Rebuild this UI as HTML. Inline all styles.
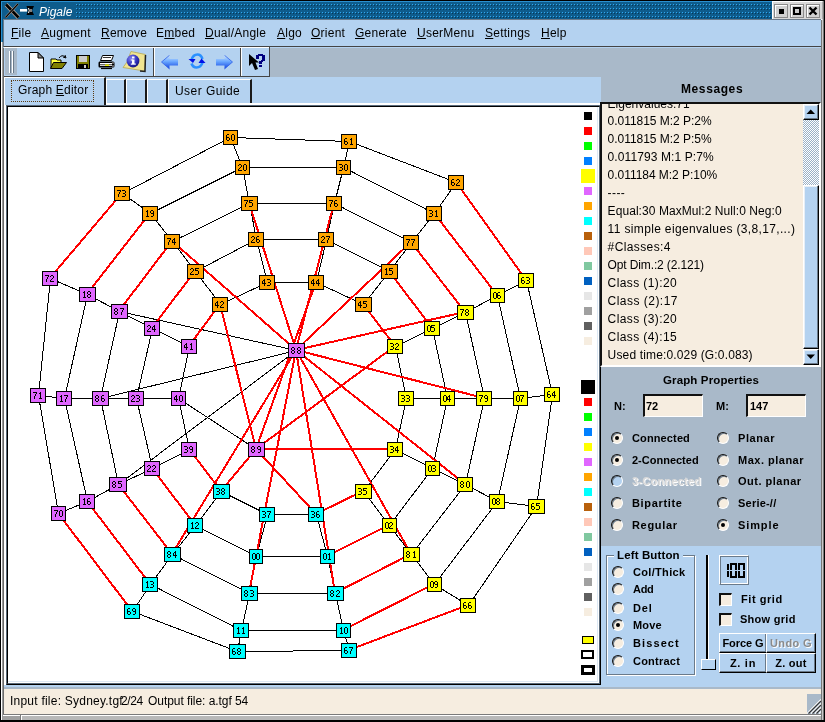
<!DOCTYPE html>
<html><head><meta charset="utf-8">
<style>
*{box-sizing:border-box}
html,body{margin:0;padding:0}
body{width:825px;height:722px;overflow:hidden;position:relative;background:#b4d2f0;font-family:"Liberation Sans",sans-serif;font-size:12px;color:#000}
.a{position:absolute}
.u{text-decoration:underline;text-underline-offset:1px}
.mi{position:absolute;top:26px;font-size:12px;line-height:14px;white-space:nowrap;letter-spacing:0.25px}
.b{font-weight:bold}
.rad{position:absolute;width:12px;height:12px;border-radius:50%;background:#f6ede0;border-top:1px solid #111;border-left:1px solid #111;border-right:1px solid #fff;border-bottom:1px solid #fff;box-shadow:inset 1px 1px 0 #6a7a8a}
.rad.on::after{content:"";position:absolute;left:3px;top:3px;width:4px;height:4px;border-radius:50%;background:#000}
.rl{position:absolute;font-weight:bold;font-size:11px;line-height:12px;white-space:nowrap}
.btn{position:absolute;background:#b4d2f0;border-top:1px solid #fff;border-left:1px solid #fff;border-right:1px solid #000;border-bottom:1px solid #000;box-shadow:inset -1px -1px 0 #6a7a8a;font-weight:bold;font-size:11px;text-align:center;line-height:19px;letter-spacing:0.4px;white-space:nowrap}
.sw{position:absolute;width:8px;height:8px}
.tab{position:absolute;top:79px;height:25px;background:#b4d2f0;border-top:1px solid #fff;border-left:1px solid #fff;border-right:2px solid #1a1a1a}
.in{position:absolute;background:#f6ede0;border-top:2px solid #111;border-left:2px solid #111;border-right:1px solid #fff;border-bottom:1px solid #fff}
</style></head><body>
<div id="wrap" style="position:absolute;left:0;top:0;width:825px;height:722px;will-change:transform">
<div class="a" style="left:0;top:0;width:825px;height:722px;background:#b4d2f0"></div>
<!-- title bar -->
<div class="a" style="left:0;top:0;width:825px;height:19px;background:#0e5c8c;border-top:1px solid #000"></div>
<div class="a" style="left:1px;top:1px;width:824px;height:1px;background:#2a90d0"></div>
<div class="a" style="left:0;top:0;width:1px;height:42px;background:#000"></div>
<div class="a" style="left:1px;top:1px;width:1px;height:41px;background:#2a90d0"></div>
<div class="a" style="left:2px;top:2px;width:1px;height:40px;background:#0e5c8c"></div>
<svg class="a" style="left:76px;top:2px" width="696" height="17">
<defs><pattern id="dots" width="3" height="4" patternUnits="userSpaceOnUse" x="0" y="2"><rect x="0" y="0" width="1" height="1" fill="#30a8f0"/><rect x="1" y="1" width="1" height="1" fill="#063a5a"/></pattern></defs>
<rect x="0" y="0" width="696" height="17" fill="url(#dots)"/>
</svg>
<svg class="a" style="left:4px;top:3px" width="32" height="16">
<path d="M2 1.5 L14.5 14.5" stroke="#c8b0a0" stroke-width="4"/>
<path d="M2 1.5 L14.5 14.5" stroke="#000" stroke-width="2.6"/>
<path d="M14 1 L1.5 14.5" stroke="#c8b0a0" stroke-width="2"/>
<path d="M14 1 L1.5 14.5" stroke="#000" stroke-width="1.2"/>
<rect x="16" y="6" width="7" height="2.6" fill="#fff"/>
<path d="M22.5 3 L30 3 L28 7.5 L30 12 L22.5 12 L24 7.5 Z" fill="#000"/>
<path d="M24.5 5 Q26 7.5 24.5 10 M27 6 V9" stroke="#fff" stroke-width="1" fill="none"/>
</svg>
<div class="a" style="left:39px;top:5px;color:#fff;font-style:italic;font-size:12px;line-height:15px">Pigale</div>
<!-- title buttons -->
<div class="a" style="left:772px;top:1px;width:51px;height:19px;background:#d8d8d8;border-left:1px solid #fff;border-top:1px solid #fff;border-bottom:1px solid #fff;border-right:1px solid #aaa"></div>
<div class="a" style="left:774px;top:4px;width:14px;height:14px;background:#d0d0d0;border:1px solid #8a8a8a;box-shadow:inset 1px 1px 0 #fff"></div>
<div class="a" style="left:779px;top:9px;width:5px;height:5px;background:#000"></div>
<div class="a" style="left:790px;top:4px;width:14px;height:14px;background:#d0d0d0;border:1px solid #8a8a8a;box-shadow:inset 1px 1px 0 #fff"></div>
<div class="a" style="left:793px;top:7px;width:8px;height:8px;border:2px solid #000;background:#ccc"></div>
<div class="a" style="left:806px;top:4px;width:14px;height:14px;background:#d0d0d0;border:1px solid #8a8a8a;box-shadow:inset 1px 1px 0 #fff"></div>
<svg class="a" style="left:806px;top:4px" width="14" height="14"><path d="M3.5 3.5 L10.5 10.5 M10.5 3.5 L3.5 10.5" stroke="#000" stroke-width="2.4"/></svg>

<!-- menu bar -->
<div class="a" style="left:3px;top:19px;width:818px;height:28px;background:#b4d2f0;border-top:1px solid #6a7a8a;border-left:1px solid #6a7a8a;border-bottom:1px solid #444"></div>
<div class="a" style="left:4px;top:47px;width:265px;height:1px;background:#fff"></div>
<div class="mi" style="left:11px"><span class="u">F</span>ile</div>
<div class="mi" style="left:41px"><span class="u">A</span>ugment</div>
<div class="mi" style="left:101px"><span class="u">R</span>emove</div>
<div class="mi" style="left:156px">E<span class="u">m</span>bed</div>
<div class="mi" style="left:205px"><span class="u">D</span>ual/Angle</div>
<div class="mi" style="left:277px"><span class="u">A</span>lgo</div>
<div class="mi" style="left:311px"><span class="u">O</span>rient</div>
<div class="mi" style="left:355px"><span class="u">G</span>enerate</div>
<div class="mi" style="left:417px"><span class="u">U</span>serMenu</div>
<div class="mi" style="left:485px"><span class="u">S</span>ettings</div>
<div class="mi" style="left:541px"><span class="u">H</span>elp</div>

<!-- toolbar -->
<div class="a" style="left:4px;top:48px;width:817px;height:29px;background:#a9b9c9"></div>
<div class="a" style="left:4px;top:46px;width:266px;height:31px;background:#b4d2f0;border-top:1px solid #444;border-right:1px solid #444;border-bottom:1px solid #444;box-shadow:inset 0 1px 0 #fff"></div>
<div class="a" style="left:5px;top:48px;width:12px;height:27px;background:#a9b9c9"></div>
<div class="a" style="left:9px;top:51px;width:2px;height:22px;background:#fff;border-right:1px solid #6a7a8a"></div>
<div class="a" style="left:12px;top:51px;width:2px;height:22px;background:#fff;border-right:1px solid #6a7a8a"></div>
<div class="a" style="left:153px;top:48px;width:2px;height:28px;border-left:1px solid #444;border-right:1px solid #fff"></div>
<div class="a" style="left:240px;top:48px;width:2px;height:28px;border-left:1px solid #444;border-right:1px solid #fff"></div>

<svg class="a" style="left:28px;top:51px" width="18" height="22">
<path d="M1.5 1.5 H10 L15.5 7 V20.5 H1.5 Z" fill="#fff" stroke="#000"/>
<path d="M10 1.5 V7 H15.5 Z" fill="#888" stroke="#000"/>
</svg>
<svg class="a" style="left:50px;top:54px" width="19" height="16">
<path d="M1 5 H6 L7 6 H11 V14 H1 Z" fill="#ffff40" stroke="#000"/>
<path d="M3.5 8.5 H16.5 L12 14.5 H0.5 Z" fill="#808000" stroke="#000"/>
<path d="M9 4 Q12 0 15 3" stroke="#000" fill="none"/><path d="M13 3 L16 4 L15 1" stroke="#000" fill="none"/>
</svg>
<svg class="a" style="left:76px;top:55px" width="15" height="15">
<rect x="0.5" y="0.5" width="13" height="13" fill="#808000" stroke="#000"/>
<rect x="3" y="1" width="8" height="6" fill="#ccc"/>
<rect x="2" y="9" width="10" height="5" fill="#000"/>
<rect x="8" y="10" width="2" height="3" fill="#ccc"/>
</svg>
<svg class="a" style="left:98px;top:54px" width="18" height="16">
<path d="M4.5 1.5 H15.5 L13.5 6.5 H2.5 Z" fill="#fff" stroke="#000"/>
<path d="M5 3.5 H13" stroke="#000" stroke-width="0.8"/>
<path d="M1.5 7.5 Q0.5 7.5 0.5 9 V12 Q0.5 13.5 1.5 13.5 H15 Q16.5 13.5 16.5 12 V9 Q16.5 7.5 15 7.5 Z" fill="#000"/>
<rect x="2" y="9" width="12" height="1" fill="#fff"/>
<rect x="2" y="10.5" width="12" height="1.5" fill="#ccc"/>
<rect x="7" y="10.5" width="4" height="1.5" fill="#ee0"/>
<path d="M3 14.5 H14" stroke="#000" stroke-width="1.2"/>
<circle cx="15" cy="9" r="0.7" fill="#fff"/><circle cx="15" cy="12" r="0.7" fill="#fff"/>
</svg>
<svg class="a" style="left:122px;top:50px" width="25" height="24">
<path d="M9 1.5 L23.5 4.5 L22.5 21 L1 17.5 L5 12 Z" fill="#f0e490" stroke="#b8a850" stroke-width="0.8"/>
<path d="M23.5 5 L23 21.5 L18 21" stroke="#222" stroke-width="1.5" fill="none"/>
<defs><radialGradient id="ig" cx="0.35" cy="0.3" r="0.8"><stop offset="0" stop-color="#8080f0"/><stop offset="0.6" stop-color="#3030b8"/><stop offset="1" stop-color="#101070"/></radialGradient></defs>
<circle cx="11" cy="11" r="6.4" fill="url(#ig)"/>
<rect x="10" y="9.5" width="2.5" height="4.5" fill="#fff"/><rect x="8.8" y="9.5" width="2" height="1" fill="#fff"/><rect x="8.8" y="13.5" width="5" height="1.2" fill="#fff"/>
<rect x="10" y="6.5" width="2.5" height="2" fill="#fff"/>
</svg>
<svg class="a" style="left:161px;top:55px" width="18" height="15">
<defs><linearGradient id="ag" x1="0" y1="0" x2="0" y2="1"><stop offset="0" stop-color="#d0e6ff"/><stop offset="0.45" stop-color="#6aa8ff"/><stop offset="1" stop-color="#1040e0"/></linearGradient></defs>
<path d="M0.5 7 L8.5 0.3 V4 H17 V10.5 H8.5 V14 Z" fill="url(#ag)"/>
<path d="M8.5 0.3 L0.5 7 L8.5 14" stroke="#3060e8" stroke-width="0.8" fill="none"/>
</svg>
<svg class="a" style="left:188px;top:53px" width="18" height="16">
<path d="M3.5 7 Q5 1.5 9.5 1.5 Q13 1.5 14.5 6" stroke="#2a90ff" stroke-width="2.6" fill="none"/>
<path d="M14.5 9.5 Q13 14.5 8.5 14.5 Q5 14.5 3.5 10.5" stroke="#2a90ff" stroke-width="2.6" fill="none"/>
<path d="M0.5 6 H7.5 L5 10 Z" fill="#0010e8"/>
<path d="M10.5 10 H17.5 L13.5 5.5 Z" fill="#0010e8"/>
</svg>
<svg class="a" style="left:215px;top:55px" width="18" height="15">
<path d="M17.5 7 L9.5 0.3 V4 H1 V10.5 H9.5 V14 Z" fill="url(#ag)"/>
<path d="M9.5 0.3 L17.5 7 L9.5 14" stroke="#3060e8" stroke-width="0.8" fill="none"/>
</svg>
<svg class="a" style="left:248px;top:53px" width="19" height="18" shape-rendering="crispEdges">
<path d="M1 1 L1 13 L4 10 L7 17 L10 16 L7.5 9.5 L11 9.5 Z" fill="#000" shape-rendering="auto"/>
<rect x="10" y="1" width="5" height="2" fill="#000080"/><rect x="8" y="2" width="3" height="4" fill="#000080"/>
<rect x="14" y="2" width="3" height="6" fill="#000080"/><rect x="13" y="7" width="2" height="2" fill="#000080"/>
<rect x="11" y="8" width="3" height="3" fill="#000080"/><rect x="11" y="12" width="3" height="2" fill="#000080"/>
</svg>


<!-- right panel gray -->
<div class="a" style="left:601px;top:77px;width:220px;height:469px;background:#a9b9c9"></div>
<!-- tabs -->
<div class="a" style="left:4px;top:77px;width:102px;height:28px;background:#b4d2f0;border-top:1px solid #fff;border-left:1px solid #fff;border-right:2px solid #1a1a1a"></div>
<div class="a" style="left:11px;top:80px;width:83px;height:22px;border:1px dotted #5a3a10"></div>
<div class="a" style="left:18px;top:83px;font-size:12px;line-height:14px;letter-spacing:0.191px">Graph <span class="u">E</span>ditor</div>
<div class="tab" style="left:106px;width:20px"></div>
<div class="tab" style="left:126px;width:21px"></div>
<div class="tab" style="left:147px;width:21px"></div>
<div class="tab" style="left:168px;width:84px"></div>
<div class="a" style="left:106px;top:103px;width:495px;height:2px;background:#fff"></div>
<div class="a" style="left:175px;top:84px;font-size:12px;line-height:14px;letter-spacing:0.444px">User Guide</div>

<!-- canvas frame -->
<div class="a" style="left:4px;top:105px;width:2px;height:580px;background:#fff"></div>
<div class="a" style="left:6px;top:105px;width:595px;height:580px;background:#fff;border-top:1px solid #5a6a7a;border-left:1px solid #5a6a7a;border-right:1px solid #000;border-bottom:1px solid #000"></div>
<div class="a" style="left:7px;top:106px;width:593px;height:578px;border-top:1px solid #000;border-left:1px solid #000;border-right:1px solid #5a6a7a;border-bottom:1px solid #5a6a7a"></div>
<div class="a" style="left:8px;top:107px;width:591px;height:576px;border-right:1px solid #fff;border-bottom:1px solid #fff"></div>
<div class="a" style="left:8px;top:107px;width:590px;height:575px;border-right:1px solid #dce8f4;border-bottom:1px solid #dce8f4"></div>
<svg width="590" height="575" viewBox="8 107 590 575" style="position:absolute;left:8px;top:107px" shape-rendering="crispEdges">
<line x1="122.5" y1="193.5" x2="230.5" y2="137.5" stroke="#000" stroke-width="1"/>
<line x1="230.5" y1="137.5" x2="349.5" y2="141.5" stroke="#000" stroke-width="1"/>
<line x1="349.5" y1="141.5" x2="456.5" y2="182.5" stroke="#000" stroke-width="1"/>
<line x1="150.5" y1="213.5" x2="242.5" y2="167.5" stroke="#000" stroke-width="1"/>
<line x1="242.5" y1="167.5" x2="343.5" y2="167.5" stroke="#000" stroke-width="1"/>
<line x1="343.5" y1="167.5" x2="434.5" y2="213.5" stroke="#000" stroke-width="1"/>
<line x1="172.5" y1="241.5" x2="249.5" y2="203.5" stroke="#000" stroke-width="1"/>
<line x1="249.5" y1="203.5" x2="334.5" y2="203.5" stroke="#000" stroke-width="1"/>
<line x1="334.5" y1="203.5" x2="411.5" y2="242.5" stroke="#000" stroke-width="1"/>
<line x1="195.5" y1="271.5" x2="256.5" y2="239.5" stroke="#000" stroke-width="1"/>
<line x1="256.5" y1="239.5" x2="326.5" y2="239.5" stroke="#000" stroke-width="1"/>
<line x1="326.5" y1="239.5" x2="389.5" y2="271.5" stroke="#000" stroke-width="1"/>
<line x1="220.5" y1="304.5" x2="267.5" y2="282.5" stroke="#000" stroke-width="1"/>
<line x1="267.5" y1="282.5" x2="316.5" y2="282.5" stroke="#000" stroke-width="1"/>
<line x1="316.5" y1="282.5" x2="363.5" y2="304.5" stroke="#000" stroke-width="1"/>
<line x1="122.5" y1="193.5" x2="150.5" y2="213.5" stroke="#000" stroke-width="1"/>
<line x1="230.5" y1="137.5" x2="242.5" y2="167.5" stroke="#000" stroke-width="1"/>
<line x1="349.5" y1="141.5" x2="343.5" y2="167.5" stroke="#000" stroke-width="1"/>
<line x1="456.5" y1="182.5" x2="434.5" y2="213.5" stroke="#000" stroke-width="1"/>
<line x1="150.5" y1="213.5" x2="172.5" y2="241.5" stroke="#000" stroke-width="1"/>
<line x1="242.5" y1="167.5" x2="249.5" y2="203.5" stroke="#000" stroke-width="1"/>
<line x1="343.5" y1="167.5" x2="334.5" y2="203.5" stroke="#000" stroke-width="1"/>
<line x1="434.5" y1="213.5" x2="411.5" y2="242.5" stroke="#000" stroke-width="1"/>
<line x1="172.5" y1="241.5" x2="195.5" y2="271.5" stroke="#000" stroke-width="1"/>
<line x1="249.5" y1="203.5" x2="256.5" y2="239.5" stroke="#000" stroke-width="1"/>
<line x1="334.5" y1="203.5" x2="326.5" y2="239.5" stroke="#000" stroke-width="1"/>
<line x1="411.5" y1="242.5" x2="389.5" y2="271.5" stroke="#000" stroke-width="1"/>
<line x1="195.5" y1="271.5" x2="220.5" y2="304.5" stroke="#000" stroke-width="1"/>
<line x1="256.5" y1="239.5" x2="267.5" y2="282.5" stroke="#000" stroke-width="1"/>
<line x1="326.5" y1="239.5" x2="316.5" y2="282.5" stroke="#000" stroke-width="1"/>
<line x1="389.5" y1="271.5" x2="363.5" y2="304.5" stroke="#000" stroke-width="1"/>
<line x1="50.5" y1="278.5" x2="38.5" y2="395.5" stroke="#000" stroke-width="1"/>
<line x1="38.5" y1="395.5" x2="58.5" y2="513.5" stroke="#000" stroke-width="1"/>
<line x1="87.5" y1="294.5" x2="64.5" y2="398.5" stroke="#000" stroke-width="1"/>
<line x1="64.5" y1="398.5" x2="87.5" y2="501.5" stroke="#000" stroke-width="1"/>
<line x1="119.5" y1="311.5" x2="100.5" y2="398.5" stroke="#000" stroke-width="1"/>
<line x1="100.5" y1="398.5" x2="118.5" y2="484.5" stroke="#000" stroke-width="1"/>
<line x1="152.5" y1="328.5" x2="136.5" y2="398.5" stroke="#000" stroke-width="1"/>
<line x1="136.5" y1="398.5" x2="152.5" y2="468.5" stroke="#000" stroke-width="1"/>
<line x1="189.5" y1="346.5" x2="178.5" y2="398.5" stroke="#000" stroke-width="1"/>
<line x1="178.5" y1="398.5" x2="189.5" y2="449.5" stroke="#000" stroke-width="1"/>
<line x1="50.5" y1="278.5" x2="87.5" y2="294.5" stroke="#000" stroke-width="1"/>
<line x1="38.5" y1="395.5" x2="64.5" y2="398.5" stroke="#000" stroke-width="1"/>
<line x1="58.5" y1="513.5" x2="87.5" y2="501.5" stroke="#000" stroke-width="1"/>
<line x1="87.5" y1="294.5" x2="119.5" y2="311.5" stroke="#000" stroke-width="1"/>
<line x1="64.5" y1="398.5" x2="100.5" y2="398.5" stroke="#000" stroke-width="1"/>
<line x1="87.5" y1="501.5" x2="118.5" y2="484.5" stroke="#000" stroke-width="1"/>
<line x1="119.5" y1="311.5" x2="152.5" y2="328.5" stroke="#000" stroke-width="1"/>
<line x1="100.5" y1="398.5" x2="136.5" y2="398.5" stroke="#000" stroke-width="1"/>
<line x1="118.5" y1="484.5" x2="152.5" y2="468.5" stroke="#000" stroke-width="1"/>
<line x1="152.5" y1="328.5" x2="189.5" y2="346.5" stroke="#000" stroke-width="1"/>
<line x1="136.5" y1="398.5" x2="178.5" y2="398.5" stroke="#000" stroke-width="1"/>
<line x1="152.5" y1="468.5" x2="189.5" y2="449.5" stroke="#000" stroke-width="1"/>
<line x1="132.5" y1="611.5" x2="237.5" y2="651.5" stroke="#000" stroke-width="1"/>
<line x1="237.5" y1="651.5" x2="349.5" y2="650.5" stroke="#000" stroke-width="1"/>
<line x1="150.5" y1="584.5" x2="241.5" y2="630.5" stroke="#000" stroke-width="1"/>
<line x1="241.5" y1="630.5" x2="343.5" y2="630.5" stroke="#000" stroke-width="1"/>
<line x1="172.5" y1="554.5" x2="249.5" y2="593.5" stroke="#000" stroke-width="1"/>
<line x1="249.5" y1="593.5" x2="335.5" y2="593.5" stroke="#000" stroke-width="1"/>
<line x1="195.5" y1="525.5" x2="256.5" y2="556.5" stroke="#000" stroke-width="1"/>
<line x1="256.5" y1="556.5" x2="327.5" y2="556.5" stroke="#000" stroke-width="1"/>
<line x1="221.5" y1="491.5" x2="267.5" y2="514.5" stroke="#000" stroke-width="1"/>
<line x1="267.5" y1="514.5" x2="316.5" y2="514.5" stroke="#000" stroke-width="1"/>
<line x1="132.5" y1="611.5" x2="150.5" y2="584.5" stroke="#000" stroke-width="1"/>
<line x1="237.5" y1="651.5" x2="241.5" y2="630.5" stroke="#000" stroke-width="1"/>
<line x1="349.5" y1="650.5" x2="343.5" y2="630.5" stroke="#000" stroke-width="1"/>
<line x1="150.5" y1="584.5" x2="172.5" y2="554.5" stroke="#000" stroke-width="1"/>
<line x1="241.5" y1="630.5" x2="249.5" y2="593.5" stroke="#000" stroke-width="1"/>
<line x1="343.5" y1="630.5" x2="335.5" y2="593.5" stroke="#000" stroke-width="1"/>
<line x1="172.5" y1="554.5" x2="195.5" y2="525.5" stroke="#000" stroke-width="1"/>
<line x1="249.5" y1="593.5" x2="256.5" y2="556.5" stroke="#000" stroke-width="1"/>
<line x1="335.5" y1="593.5" x2="327.5" y2="556.5" stroke="#000" stroke-width="1"/>
<line x1="195.5" y1="525.5" x2="221.5" y2="491.5" stroke="#000" stroke-width="1"/>
<line x1="256.5" y1="556.5" x2="267.5" y2="514.5" stroke="#000" stroke-width="1"/>
<line x1="327.5" y1="556.5" x2="316.5" y2="514.5" stroke="#000" stroke-width="1"/>
<line x1="526.5" y1="280.5" x2="552.5" y2="394.5" stroke="#000" stroke-width="1"/>
<line x1="552.5" y1="394.5" x2="536.5" y2="506.5" stroke="#000" stroke-width="1"/>
<line x1="536.5" y1="506.5" x2="468.5" y2="605.5" stroke="#000" stroke-width="1"/>
<line x1="497.5" y1="295.5" x2="520.5" y2="398.5" stroke="#000" stroke-width="1"/>
<line x1="520.5" y1="398.5" x2="497.5" y2="501.5" stroke="#000" stroke-width="1"/>
<line x1="497.5" y1="501.5" x2="434.5" y2="584.5" stroke="#000" stroke-width="1"/>
<line x1="465.5" y1="312.5" x2="484.5" y2="398.5" stroke="#000" stroke-width="1"/>
<line x1="484.5" y1="398.5" x2="465.5" y2="484.5" stroke="#000" stroke-width="1"/>
<line x1="465.5" y1="484.5" x2="411.5" y2="554.5" stroke="#000" stroke-width="1"/>
<line x1="432.5" y1="328.5" x2="447.5" y2="398.5" stroke="#000" stroke-width="1"/>
<line x1="447.5" y1="398.5" x2="432.5" y2="468.5" stroke="#000" stroke-width="1"/>
<line x1="432.5" y1="468.5" x2="389.5" y2="525.5" stroke="#000" stroke-width="1"/>
<line x1="395.5" y1="346.5" x2="406.5" y2="398.5" stroke="#000" stroke-width="1"/>
<line x1="406.5" y1="398.5" x2="395.5" y2="449.5" stroke="#000" stroke-width="1"/>
<line x1="395.5" y1="449.5" x2="363.5" y2="491.5" stroke="#000" stroke-width="1"/>
<line x1="526.5" y1="280.5" x2="497.5" y2="295.5" stroke="#000" stroke-width="1"/>
<line x1="552.5" y1="394.5" x2="520.5" y2="398.5" stroke="#000" stroke-width="1"/>
<line x1="536.5" y1="506.5" x2="497.5" y2="501.5" stroke="#000" stroke-width="1"/>
<line x1="468.5" y1="605.5" x2="434.5" y2="584.5" stroke="#000" stroke-width="1"/>
<line x1="497.5" y1="295.5" x2="465.5" y2="312.5" stroke="#000" stroke-width="1"/>
<line x1="520.5" y1="398.5" x2="484.5" y2="398.5" stroke="#000" stroke-width="1"/>
<line x1="497.5" y1="501.5" x2="465.5" y2="484.5" stroke="#000" stroke-width="1"/>
<line x1="434.5" y1="584.5" x2="411.5" y2="554.5" stroke="#000" stroke-width="1"/>
<line x1="465.5" y1="312.5" x2="432.5" y2="328.5" stroke="#000" stroke-width="1"/>
<line x1="484.5" y1="398.5" x2="447.5" y2="398.5" stroke="#000" stroke-width="1"/>
<line x1="465.5" y1="484.5" x2="432.5" y2="468.5" stroke="#000" stroke-width="1"/>
<line x1="411.5" y1="554.5" x2="389.5" y2="525.5" stroke="#000" stroke-width="1"/>
<line x1="432.5" y1="328.5" x2="395.5" y2="346.5" stroke="#000" stroke-width="1"/>
<line x1="447.5" y1="398.5" x2="406.5" y2="398.5" stroke="#000" stroke-width="1"/>
<line x1="432.5" y1="468.5" x2="395.5" y2="449.5" stroke="#000" stroke-width="1"/>
<line x1="389.5" y1="525.5" x2="363.5" y2="491.5" stroke="#000" stroke-width="1"/>
<line x1="296.5" y1="350.5" x2="118.5" y2="484.5" stroke="#000" stroke-width="1"/>
<line x1="296.5" y1="350.5" x2="100.5" y2="398.5" stroke="#000" stroke-width="1"/>
<line x1="296.5" y1="350.5" x2="119.5" y2="311.5" stroke="#000" stroke-width="1"/>
<line x1="256.5" y1="449.5" x2="178.5" y2="398.5" stroke="#000" stroke-width="1"/>
<line x1="122" y1="193" x2="50" y2="278" stroke="#f00" stroke-width="2"/>
<line x1="58" y1="513" x2="132" y2="611" stroke="#f00" stroke-width="2"/>
<line x1="349" y1="650" x2="468" y2="605" stroke="#f00" stroke-width="2"/>
<line x1="526" y1="280" x2="456" y2="182" stroke="#f00" stroke-width="2"/>
<line x1="150" y1="213" x2="87" y2="294" stroke="#f00" stroke-width="2"/>
<line x1="87" y1="501" x2="150" y2="584" stroke="#f00" stroke-width="2"/>
<line x1="343" y1="630" x2="434" y2="584" stroke="#f00" stroke-width="2"/>
<line x1="497" y1="295" x2="434" y2="213" stroke="#f00" stroke-width="2"/>
<line x1="172" y1="241" x2="119" y2="311" stroke="#f00" stroke-width="2"/>
<line x1="118" y1="484" x2="172" y2="554" stroke="#f00" stroke-width="2"/>
<line x1="335" y1="593" x2="411" y2="554" stroke="#f00" stroke-width="2"/>
<line x1="465" y1="312" x2="411" y2="242" stroke="#f00" stroke-width="2"/>
<line x1="195" y1="271" x2="152" y2="328" stroke="#f00" stroke-width="2"/>
<line x1="152" y1="468" x2="195" y2="525" stroke="#f00" stroke-width="2"/>
<line x1="327" y1="556" x2="389" y2="525" stroke="#f00" stroke-width="2"/>
<line x1="432" y1="328" x2="389" y2="271" stroke="#f00" stroke-width="2"/>
<line x1="220" y1="304" x2="189" y2="346" stroke="#f00" stroke-width="2"/>
<line x1="189" y1="449" x2="221" y2="491" stroke="#f00" stroke-width="2"/>
<line x1="316" y1="514" x2="363" y2="491" stroke="#f00" stroke-width="2"/>
<line x1="395" y1="346" x2="363" y2="304" stroke="#f00" stroke-width="2"/>
<line x1="296" y1="350" x2="172" y2="241" stroke="#f00" stroke-width="2"/>
<line x1="296" y1="350" x2="249" y2="203" stroke="#f00" stroke-width="2"/>
<line x1="296" y1="350" x2="334" y2="203" stroke="#f00" stroke-width="2"/>
<line x1="296" y1="350" x2="411" y2="242" stroke="#f00" stroke-width="2"/>
<line x1="296" y1="350" x2="465" y2="312" stroke="#f00" stroke-width="2"/>
<line x1="296" y1="350" x2="484" y2="398" stroke="#f00" stroke-width="2"/>
<line x1="296" y1="350" x2="465" y2="484" stroke="#f00" stroke-width="2"/>
<line x1="296" y1="350" x2="411" y2="554" stroke="#f00" stroke-width="2"/>
<line x1="296" y1="350" x2="335" y2="593" stroke="#f00" stroke-width="2"/>
<line x1="296" y1="350" x2="249" y2="593" stroke="#f00" stroke-width="2"/>
<line x1="296" y1="350" x2="172" y2="554" stroke="#f00" stroke-width="2"/>
<line x1="256" y1="449" x2="220" y2="304" stroke="#f00" stroke-width="2"/>
<line x1="256" y1="449" x2="316" y2="282" stroke="#f00" stroke-width="2"/>
<line x1="256" y1="449" x2="395" y2="346" stroke="#f00" stroke-width="2"/>
<line x1="256" y1="449" x2="395" y2="449" stroke="#f00" stroke-width="2"/>
<line x1="256" y1="449" x2="316" y2="514" stroke="#f00" stroke-width="2"/>
<line x1="256" y1="449" x2="221" y2="491" stroke="#f00" stroke-width="2"/>
<rect x="249.5" y="549.5" width="13" height="14" fill="#00ffff" stroke="#000"/>
<rect x="320.5" y="549.5" width="14" height="14" fill="#00ffff" stroke="#000"/>
<rect x="382.5" y="518.5" width="14" height="14" fill="#ffff00" stroke="#000"/>
<rect x="425.5" y="461.5" width="14" height="14" fill="#ffff00" stroke="#000"/>
<rect x="440.5" y="391.5" width="14" height="14" fill="#ffff00" stroke="#000"/>
<rect x="424.5" y="321.5" width="15" height="14" fill="#ffff00" stroke="#000"/>
<rect x="490.5" y="288.5" width="14" height="14" fill="#ffff00" stroke="#000"/>
<rect x="513.5" y="391.5" width="14" height="14" fill="#ffff00" stroke="#000"/>
<rect x="489.5" y="494.5" width="15" height="14" fill="#ffff00" stroke="#000"/>
<rect x="427.5" y="577.5" width="14" height="14" fill="#ffff00" stroke="#000"/>
<rect x="336.5" y="623.5" width="14" height="14" fill="#00ffff" stroke="#000"/>
<rect x="233.5" y="623.5" width="15" height="14" fill="#00ffff" stroke="#000"/>
<rect x="187.5" y="518.5" width="15" height="14" fill="#00ffff" stroke="#000"/>
<rect x="142.5" y="577.5" width="15" height="14" fill="#00ffff" stroke="#000"/>
<rect x="381.5" y="264.5" width="16" height="14" fill="#ffa500" stroke="#000"/>
<rect x="79.5" y="494.5" width="15" height="14" fill="#e066ff" stroke="#000"/>
<rect x="56.5" y="391.5" width="15" height="14" fill="#e066ff" stroke="#000"/>
<rect x="79.5" y="287.5" width="16" height="14" fill="#e066ff" stroke="#000"/>
<rect x="142.5" y="206.5" width="15" height="14" fill="#ffa500" stroke="#000"/>
<rect x="235.5" y="160.5" width="14" height="14" fill="#ffa500" stroke="#000"/>
<rect x="144.5" y="461.5" width="15" height="14" fill="#e066ff" stroke="#000"/>
<rect x="128.5" y="391.5" width="15" height="14" fill="#e066ff" stroke="#000"/>
<rect x="144.5" y="321.5" width="15" height="14" fill="#e066ff" stroke="#000"/>
<rect x="187.5" y="264.5" width="16" height="14" fill="#ffa500" stroke="#000"/>
<rect x="248.5" y="232.5" width="15" height="14" fill="#ffa500" stroke="#000"/>
<rect x="318.5" y="232.5" width="15" height="14" fill="#ffa500" stroke="#000"/>
<rect x="336.5" y="160.5" width="14" height="14" fill="#ffa500" stroke="#000"/>
<rect x="426.5" y="206.5" width="15" height="14" fill="#ffa500" stroke="#000"/>
<rect x="387.5" y="339.5" width="15" height="14" fill="#ffff00" stroke="#000"/>
<rect x="398.5" y="391.5" width="15" height="14" fill="#ffff00" stroke="#000"/>
<rect x="387.5" y="442.5" width="15" height="14" fill="#ffff00" stroke="#000"/>
<rect x="355.5" y="484.5" width="16" height="14" fill="#ffff00" stroke="#000"/>
<rect x="308.5" y="507.5" width="15" height="14" fill="#00ffff" stroke="#000"/>
<rect x="259.5" y="507.5" width="15" height="14" fill="#00ffff" stroke="#000"/>
<rect x="213.5" y="484.5" width="16" height="14" fill="#00ffff" stroke="#000"/>
<rect x="181.5" y="442.5" width="15" height="14" fill="#e066ff" stroke="#000"/>
<rect x="171.5" y="391.5" width="14" height="14" fill="#e066ff" stroke="#000"/>
<rect x="181.5" y="339.5" width="15" height="14" fill="#e066ff" stroke="#000"/>
<rect x="212.5" y="297.5" width="15" height="14" fill="#ffa500" stroke="#000"/>
<rect x="259.5" y="275.5" width="15" height="14" fill="#ffa500" stroke="#000"/>
<rect x="308.5" y="275.5" width="15" height="14" fill="#ffa500" stroke="#000"/>
<rect x="355.5" y="297.5" width="16" height="14" fill="#ffa500" stroke="#000"/>
<rect x="223.5" y="130.5" width="14" height="14" fill="#ffa500" stroke="#000"/>
<rect x="341.5" y="134.5" width="15" height="14" fill="#ffa500" stroke="#000"/>
<rect x="448.5" y="175.5" width="15" height="14" fill="#ffa500" stroke="#000"/>
<rect x="518.5" y="273.5" width="15" height="14" fill="#ffff00" stroke="#000"/>
<rect x="544.5" y="387.5" width="15" height="14" fill="#ffff00" stroke="#000"/>
<rect x="528.5" y="499.5" width="16" height="14" fill="#ffff00" stroke="#000"/>
<rect x="460.5" y="598.5" width="15" height="14" fill="#ffff00" stroke="#000"/>
<rect x="341.5" y="643.5" width="15" height="14" fill="#00ffff" stroke="#000"/>
<rect x="229.5" y="644.5" width="16" height="14" fill="#00ffff" stroke="#000"/>
<rect x="124.5" y="604.5" width="15" height="14" fill="#00ffff" stroke="#000"/>
<rect x="51.5" y="506.5" width="14" height="14" fill="#e066ff" stroke="#000"/>
<rect x="30.5" y="388.5" width="15" height="14" fill="#e066ff" stroke="#000"/>
<rect x="42.5" y="271.5" width="15" height="14" fill="#e066ff" stroke="#000"/>
<rect x="114.5" y="186.5" width="15" height="14" fill="#ffa500" stroke="#000"/>
<rect x="164.5" y="234.5" width="15" height="14" fill="#ffa500" stroke="#000"/>
<rect x="241.5" y="196.5" width="16" height="14" fill="#ffa500" stroke="#000"/>
<rect x="326.5" y="196.5" width="15" height="14" fill="#ffa500" stroke="#000"/>
<rect x="403.5" y="235.5" width="15" height="14" fill="#ffa500" stroke="#000"/>
<rect x="457.5" y="305.5" width="16" height="14" fill="#ffff00" stroke="#000"/>
<rect x="476.5" y="391.5" width="15" height="14" fill="#ffff00" stroke="#000"/>
<rect x="457.5" y="477.5" width="15" height="14" fill="#ffff00" stroke="#000"/>
<rect x="403.5" y="547.5" width="16" height="14" fill="#ffff00" stroke="#000"/>
<rect x="327.5" y="586.5" width="16" height="14" fill="#00ffff" stroke="#000"/>
<rect x="241.5" y="586.5" width="16" height="14" fill="#00ffff" stroke="#000"/>
<rect x="164.5" y="547.5" width="16" height="14" fill="#00ffff" stroke="#000"/>
<rect x="109.5" y="477.5" width="17" height="14" fill="#e066ff" stroke="#000"/>
<rect x="92.5" y="391.5" width="16" height="14" fill="#e066ff" stroke="#000"/>
<rect x="111.5" y="304.5" width="16" height="14" fill="#e066ff" stroke="#000"/>
<rect x="288.5" y="343.5" width="16" height="14" fill="#e066ff" stroke="#000"/>
<rect x="248.5" y="442.5" width="16" height="14" fill="#e066ff" stroke="#000"/>
<path fill="#000" d="
M253 553h2v1h-2zM252 554h1v1h-1zM255 554h1v1h-1zM252 555h1v1h-1zM255 555h1v1h-1zM252 556h1v1h-1zM255 556h1v1h-1zM252 557h1v1h-1zM255 557h1v1h-1zM252 558h1v1h-1zM255 558h1v1h-1zM253 559h2v1h-2zM257 553h2v1h-2zM256 554h1v1h-1zM259 554h1v1h-1zM256 555h1v1h-1zM259 555h1v1h-1zM256 556h1v1h-1zM259 556h1v1h-1zM256 557h1v1h-1zM259 557h1v1h-1zM256 558h1v1h-1zM259 558h1v1h-1zM257 559h2v1h-2z
M324 553h2v1h-2zM323 554h1v1h-1zM326 554h1v1h-1zM323 555h1v1h-1zM326 555h1v1h-1zM323 556h1v1h-1zM326 556h1v1h-1zM323 557h1v1h-1zM326 557h1v1h-1zM323 558h1v1h-1zM326 558h1v1h-1zM324 559h2v1h-2zM329 553h1v1h-1zM328 554h2v1h-2zM329 555h1v1h-1zM329 556h1v1h-1zM329 557h1v1h-1zM329 558h1v1h-1zM328 559h3v1h-3z
M386 522h2v1h-2zM385 523h1v1h-1zM388 523h1v1h-1zM385 524h1v1h-1zM388 524h1v1h-1zM385 525h1v1h-1zM388 525h1v1h-1zM385 526h1v1h-1zM388 526h1v1h-1zM385 527h1v1h-1zM388 527h1v1h-1zM386 528h2v1h-2zM390 522h2v1h-2zM389 523h1v1h-1zM392 523h1v1h-1zM392 524h1v1h-1zM391 525h1v1h-1zM390 526h1v1h-1zM389 527h1v1h-1zM389 528h4v1h-4z
M429 465h2v1h-2zM428 466h1v1h-1zM431 466h1v1h-1zM428 467h1v1h-1zM431 467h1v1h-1zM428 468h1v1h-1zM431 468h1v1h-1zM428 469h1v1h-1zM431 469h1v1h-1zM428 470h1v1h-1zM431 470h1v1h-1zM429 471h2v1h-2zM432 465h3v1h-3zM435 466h1v1h-1zM435 467h1v1h-1zM433 468h2v1h-2zM435 469h1v1h-1zM435 470h1v1h-1zM432 471h3v1h-3z
M444 395h2v1h-2zM443 396h1v1h-1zM446 396h1v1h-1zM443 397h1v1h-1zM446 397h1v1h-1zM443 398h1v1h-1zM446 398h1v1h-1zM443 399h1v1h-1zM446 399h1v1h-1zM443 400h1v1h-1zM446 400h1v1h-1zM444 401h2v1h-2zM449 395h1v1h-1zM448 396h2v1h-2zM447 397h1v1h-1zM449 397h1v1h-1zM447 398h1v1h-1zM449 398h1v1h-1zM447 399h4v1h-4zM449 400h1v1h-1zM449 401h1v1h-1z
M428 325h2v1h-2zM427 326h1v1h-1zM430 326h1v1h-1zM427 327h1v1h-1zM430 327h1v1h-1zM427 328h1v1h-1zM430 328h1v1h-1zM427 329h1v1h-1zM430 329h1v1h-1zM427 330h1v1h-1zM430 330h1v1h-1zM428 331h2v1h-2zM431 325h4v1h-4zM431 326h1v1h-1zM431 327h3v1h-3zM434 328h1v1h-1zM434 329h1v1h-1zM434 330h1v1h-1zM431 331h3v1h-3z
M494 292h2v1h-2zM493 293h1v1h-1zM496 293h1v1h-1zM493 294h1v1h-1zM496 294h1v1h-1zM493 295h1v1h-1zM496 295h1v1h-1zM493 296h1v1h-1zM496 296h1v1h-1zM493 297h1v1h-1zM496 297h1v1h-1zM494 298h2v1h-2zM498 292h2v1h-2zM497 293h1v1h-1zM497 294h1v1h-1zM497 295h3v1h-3zM497 296h1v1h-1zM500 296h1v1h-1zM497 297h1v1h-1zM500 297h1v1h-1zM498 298h2v1h-2z
M517 395h2v1h-2zM516 396h1v1h-1zM519 396h1v1h-1zM516 397h1v1h-1zM519 397h1v1h-1zM516 398h1v1h-1zM519 398h1v1h-1zM516 399h1v1h-1zM519 399h1v1h-1zM516 400h1v1h-1zM519 400h1v1h-1zM517 401h2v1h-2zM520 395h4v1h-4zM523 396h1v1h-1zM522 397h1v1h-1zM522 398h1v1h-1zM521 399h1v1h-1zM521 400h1v1h-1zM521 401h1v1h-1z
M493 498h2v1h-2zM492 499h1v1h-1zM495 499h1v1h-1zM492 500h1v1h-1zM495 500h1v1h-1zM492 501h1v1h-1zM495 501h1v1h-1zM492 502h1v1h-1zM495 502h1v1h-1zM492 503h1v1h-1zM495 503h1v1h-1zM493 504h2v1h-2zM497 498h2v1h-2zM496 499h1v1h-1zM499 499h1v1h-1zM496 500h1v1h-1zM499 500h1v1h-1zM497 501h2v1h-2zM496 502h1v1h-1zM499 502h1v1h-1zM496 503h1v1h-1zM499 503h1v1h-1zM497 504h2v1h-2z
M431 581h2v1h-2zM430 582h1v1h-1zM433 582h1v1h-1zM430 583h1v1h-1zM433 583h1v1h-1zM430 584h1v1h-1zM433 584h1v1h-1zM430 585h1v1h-1zM433 585h1v1h-1zM430 586h1v1h-1zM433 586h1v1h-1zM431 587h2v1h-2zM435 581h2v1h-2zM434 582h1v1h-1zM437 582h1v1h-1zM434 583h1v1h-1zM437 583h1v1h-1zM435 584h3v1h-3zM437 585h1v1h-1zM437 586h1v1h-1zM435 587h2v1h-2z
M341 627h1v1h-1zM340 628h2v1h-2zM341 629h1v1h-1zM341 630h1v1h-1zM341 631h1v1h-1zM341 632h1v1h-1zM340 633h3v1h-3zM345 627h2v1h-2zM344 628h1v1h-1zM347 628h1v1h-1zM344 629h1v1h-1zM347 629h1v1h-1zM344 630h1v1h-1zM347 630h1v1h-1zM344 631h1v1h-1zM347 631h1v1h-1zM344 632h1v1h-1zM347 632h1v1h-1zM345 633h2v1h-2z
M238 627h1v1h-1zM237 628h2v1h-2zM238 629h1v1h-1zM238 630h1v1h-1zM238 631h1v1h-1zM238 632h1v1h-1zM237 633h3v1h-3zM243 627h1v1h-1zM242 628h2v1h-2zM243 629h1v1h-1zM243 630h1v1h-1zM243 631h1v1h-1zM243 632h1v1h-1zM242 633h3v1h-3z
M192 522h1v1h-1zM191 523h2v1h-2zM192 524h1v1h-1zM192 525h1v1h-1zM192 526h1v1h-1zM192 527h1v1h-1zM191 528h3v1h-3zM196 522h2v1h-2zM195 523h1v1h-1zM198 523h1v1h-1zM198 524h1v1h-1zM197 525h1v1h-1zM196 526h1v1h-1zM195 527h1v1h-1zM195 528h4v1h-4z
M147 581h1v1h-1zM146 582h2v1h-2zM147 583h1v1h-1zM147 584h1v1h-1zM147 585h1v1h-1zM147 586h1v1h-1zM146 587h3v1h-3zM150 581h3v1h-3zM153 582h1v1h-1zM153 583h1v1h-1zM151 584h2v1h-2zM153 585h1v1h-1zM153 586h1v1h-1zM150 587h3v1h-3z
M386 268h1v1h-1zM385 269h2v1h-2zM386 270h1v1h-1zM386 271h1v1h-1zM386 272h1v1h-1zM386 273h1v1h-1zM385 274h3v1h-3zM389 268h4v1h-4zM389 269h1v1h-1zM389 270h3v1h-3zM392 271h1v1h-1zM392 272h1v1h-1zM392 273h1v1h-1zM389 274h3v1h-3z
M84 498h1v1h-1zM83 499h2v1h-2zM84 500h1v1h-1zM84 501h1v1h-1zM84 502h1v1h-1zM84 503h1v1h-1zM83 504h3v1h-3zM88 498h2v1h-2zM87 499h1v1h-1zM87 500h1v1h-1zM87 501h3v1h-3zM87 502h1v1h-1zM90 502h1v1h-1zM87 503h1v1h-1zM90 503h1v1h-1zM88 504h2v1h-2z
M61 395h1v1h-1zM60 396h2v1h-2zM61 397h1v1h-1zM61 398h1v1h-1zM61 399h1v1h-1zM61 400h1v1h-1zM60 401h3v1h-3zM64 395h4v1h-4zM67 396h1v1h-1zM66 397h1v1h-1zM66 398h1v1h-1zM65 399h1v1h-1zM65 400h1v1h-1zM65 401h1v1h-1z
M84 291h1v1h-1zM83 292h2v1h-2zM84 293h1v1h-1zM84 294h1v1h-1zM84 295h1v1h-1zM84 296h1v1h-1zM83 297h3v1h-3zM88 291h2v1h-2zM87 292h1v1h-1zM90 292h1v1h-1zM87 293h1v1h-1zM90 293h1v1h-1zM88 294h2v1h-2zM87 295h1v1h-1zM90 295h1v1h-1zM87 296h1v1h-1zM90 296h1v1h-1zM88 297h2v1h-2z
M147 210h1v1h-1zM146 211h2v1h-2zM147 212h1v1h-1zM147 213h1v1h-1zM147 214h1v1h-1zM147 215h1v1h-1zM146 216h3v1h-3zM151 210h2v1h-2zM150 211h1v1h-1zM153 211h1v1h-1zM150 212h1v1h-1zM153 212h1v1h-1zM151 213h3v1h-3zM153 214h1v1h-1zM153 215h1v1h-1zM151 216h2v1h-2z
M239 164h2v1h-2zM238 165h1v1h-1zM241 165h1v1h-1zM241 166h1v1h-1zM240 167h1v1h-1zM239 168h1v1h-1zM238 169h1v1h-1zM238 170h4v1h-4zM244 164h2v1h-2zM243 165h1v1h-1zM246 165h1v1h-1zM243 166h1v1h-1zM246 166h1v1h-1zM243 167h1v1h-1zM246 167h1v1h-1zM243 168h1v1h-1zM246 168h1v1h-1zM243 169h1v1h-1zM246 169h1v1h-1zM244 170h2v1h-2z
M148 465h2v1h-2zM147 466h1v1h-1zM150 466h1v1h-1zM150 467h1v1h-1zM149 468h1v1h-1zM148 469h1v1h-1zM147 470h1v1h-1zM147 471h4v1h-4zM153 465h2v1h-2zM152 466h1v1h-1zM155 466h1v1h-1zM155 467h1v1h-1zM154 468h1v1h-1zM153 469h1v1h-1zM152 470h1v1h-1zM152 471h4v1h-4z
M132 395h2v1h-2zM131 396h1v1h-1zM134 396h1v1h-1zM134 397h1v1h-1zM133 398h1v1h-1zM132 399h1v1h-1zM131 400h1v1h-1zM131 401h4v1h-4zM136 395h3v1h-3zM139 396h1v1h-1zM139 397h1v1h-1zM137 398h2v1h-2zM139 399h1v1h-1zM139 400h1v1h-1zM136 401h3v1h-3z
M148 325h2v1h-2zM147 326h1v1h-1zM150 326h1v1h-1zM150 327h1v1h-1zM149 328h1v1h-1zM148 329h1v1h-1zM147 330h1v1h-1zM147 331h4v1h-4zM154 325h1v1h-1zM153 326h2v1h-2zM152 327h1v1h-1zM154 327h1v1h-1zM152 328h1v1h-1zM154 328h1v1h-1zM152 329h4v1h-4zM154 330h1v1h-1zM154 331h1v1h-1z
M191 268h2v1h-2zM190 269h1v1h-1zM193 269h1v1h-1zM193 270h1v1h-1zM192 271h1v1h-1zM191 272h1v1h-1zM190 273h1v1h-1zM190 274h4v1h-4zM195 268h4v1h-4zM195 269h1v1h-1zM195 270h3v1h-3zM198 271h1v1h-1zM198 272h1v1h-1zM198 273h1v1h-1zM195 274h3v1h-3z
M252 236h2v1h-2zM251 237h1v1h-1zM254 237h1v1h-1zM254 238h1v1h-1zM253 239h1v1h-1zM252 240h1v1h-1zM251 241h1v1h-1zM251 242h4v1h-4zM257 236h2v1h-2zM256 237h1v1h-1zM256 238h1v1h-1zM256 239h3v1h-3zM256 240h1v1h-1zM259 240h1v1h-1zM256 241h1v1h-1zM259 241h1v1h-1zM257 242h2v1h-2z
M322 236h2v1h-2zM321 237h1v1h-1zM324 237h1v1h-1zM324 238h1v1h-1zM323 239h1v1h-1zM322 240h1v1h-1zM321 241h1v1h-1zM321 242h4v1h-4zM326 236h4v1h-4zM329 237h1v1h-1zM328 238h1v1h-1zM328 239h1v1h-1zM327 240h1v1h-1zM327 241h1v1h-1zM327 242h1v1h-1z
M339 164h3v1h-3zM342 165h1v1h-1zM342 166h1v1h-1zM340 167h2v1h-2zM342 168h1v1h-1zM342 169h1v1h-1zM339 170h3v1h-3zM345 164h2v1h-2zM344 165h1v1h-1zM347 165h1v1h-1zM344 166h1v1h-1zM347 166h1v1h-1zM344 167h1v1h-1zM347 167h1v1h-1zM344 168h1v1h-1zM347 168h1v1h-1zM344 169h1v1h-1zM347 169h1v1h-1zM345 170h2v1h-2z
M429 210h3v1h-3zM432 211h1v1h-1zM432 212h1v1h-1zM430 213h2v1h-2zM432 214h1v1h-1zM432 215h1v1h-1zM429 216h3v1h-3zM436 210h1v1h-1zM435 211h2v1h-2zM436 212h1v1h-1zM436 213h1v1h-1zM436 214h1v1h-1zM436 215h1v1h-1zM435 216h3v1h-3z
M390 343h3v1h-3zM393 344h1v1h-1zM393 345h1v1h-1zM391 346h2v1h-2zM393 347h1v1h-1zM393 348h1v1h-1zM390 349h3v1h-3zM396 343h2v1h-2zM395 344h1v1h-1zM398 344h1v1h-1zM398 345h1v1h-1zM397 346h1v1h-1zM396 347h1v1h-1zM395 348h1v1h-1zM395 349h4v1h-4z
M401 395h3v1h-3zM404 396h1v1h-1zM404 397h1v1h-1zM402 398h2v1h-2zM404 399h1v1h-1zM404 400h1v1h-1zM401 401h3v1h-3zM406 395h3v1h-3zM409 396h1v1h-1zM409 397h1v1h-1zM407 398h2v1h-2zM409 399h1v1h-1zM409 400h1v1h-1zM406 401h3v1h-3z
M390 446h3v1h-3zM393 447h1v1h-1zM393 448h1v1h-1zM391 449h2v1h-2zM393 450h1v1h-1zM393 451h1v1h-1zM390 452h3v1h-3zM397 446h1v1h-1zM396 447h2v1h-2zM395 448h1v1h-1zM397 448h1v1h-1zM395 449h1v1h-1zM397 449h1v1h-1zM395 450h4v1h-4zM397 451h1v1h-1zM397 452h1v1h-1z
M358 488h3v1h-3zM361 489h1v1h-1zM361 490h1v1h-1zM359 491h2v1h-2zM361 492h1v1h-1zM361 493h1v1h-1zM358 494h3v1h-3zM363 488h4v1h-4zM363 489h1v1h-1zM363 490h3v1h-3zM366 491h1v1h-1zM366 492h1v1h-1zM366 493h1v1h-1zM363 494h3v1h-3z
M311 511h3v1h-3zM314 512h1v1h-1zM314 513h1v1h-1zM312 514h2v1h-2zM314 515h1v1h-1zM314 516h1v1h-1zM311 517h3v1h-3zM317 511h2v1h-2zM316 512h1v1h-1zM316 513h1v1h-1zM316 514h3v1h-3zM316 515h1v1h-1zM319 515h1v1h-1zM316 516h1v1h-1zM319 516h1v1h-1zM317 517h2v1h-2z
M262 511h3v1h-3zM265 512h1v1h-1zM265 513h1v1h-1zM263 514h2v1h-2zM265 515h1v1h-1zM265 516h1v1h-1zM262 517h3v1h-3zM267 511h4v1h-4zM270 512h1v1h-1zM269 513h1v1h-1zM269 514h1v1h-1zM268 515h1v1h-1zM268 516h1v1h-1zM268 517h1v1h-1z
M216 488h3v1h-3zM219 489h1v1h-1zM219 490h1v1h-1zM217 491h2v1h-2zM219 492h1v1h-1zM219 493h1v1h-1zM216 494h3v1h-3zM222 488h2v1h-2zM221 489h1v1h-1zM224 489h1v1h-1zM221 490h1v1h-1zM224 490h1v1h-1zM222 491h2v1h-2zM221 492h1v1h-1zM224 492h1v1h-1zM221 493h1v1h-1zM224 493h1v1h-1zM222 494h2v1h-2z
M184 446h3v1h-3zM187 447h1v1h-1zM187 448h1v1h-1zM185 449h2v1h-2zM187 450h1v1h-1zM187 451h1v1h-1zM184 452h3v1h-3zM190 446h2v1h-2zM189 447h1v1h-1zM192 447h1v1h-1zM189 448h1v1h-1zM192 448h1v1h-1zM190 449h3v1h-3zM192 450h1v1h-1zM192 451h1v1h-1zM190 452h2v1h-2z
M176 395h1v1h-1zM175 396h2v1h-2zM174 397h1v1h-1zM176 397h1v1h-1zM174 398h1v1h-1zM176 398h1v1h-1zM174 399h4v1h-4zM176 400h1v1h-1zM176 401h1v1h-1zM180 395h2v1h-2zM179 396h1v1h-1zM182 396h1v1h-1zM179 397h1v1h-1zM182 397h1v1h-1zM179 398h1v1h-1zM182 398h1v1h-1zM179 399h1v1h-1zM182 399h1v1h-1zM179 400h1v1h-1zM182 400h1v1h-1zM180 401h2v1h-2z
M186 343h1v1h-1zM185 344h2v1h-2zM184 345h1v1h-1zM186 345h1v1h-1zM184 346h1v1h-1zM186 346h1v1h-1zM184 347h4v1h-4zM186 348h1v1h-1zM186 349h1v1h-1zM191 343h1v1h-1zM190 344h2v1h-2zM191 345h1v1h-1zM191 346h1v1h-1zM191 347h1v1h-1zM191 348h1v1h-1zM190 349h3v1h-3z
M217 301h1v1h-1zM216 302h2v1h-2zM215 303h1v1h-1zM217 303h1v1h-1zM215 304h1v1h-1zM217 304h1v1h-1zM215 305h4v1h-4zM217 306h1v1h-1zM217 307h1v1h-1zM221 301h2v1h-2zM220 302h1v1h-1zM223 302h1v1h-1zM223 303h1v1h-1zM222 304h1v1h-1zM221 305h1v1h-1zM220 306h1v1h-1zM220 307h4v1h-4z
M264 279h1v1h-1zM263 280h2v1h-2zM262 281h1v1h-1zM264 281h1v1h-1zM262 282h1v1h-1zM264 282h1v1h-1zM262 283h4v1h-4zM264 284h1v1h-1zM264 285h1v1h-1zM267 279h3v1h-3zM270 280h1v1h-1zM270 281h1v1h-1zM268 282h2v1h-2zM270 283h1v1h-1zM270 284h1v1h-1zM267 285h3v1h-3z
M313 279h1v1h-1zM312 280h2v1h-2zM311 281h1v1h-1zM313 281h1v1h-1zM311 282h1v1h-1zM313 282h1v1h-1zM311 283h4v1h-4zM313 284h1v1h-1zM313 285h1v1h-1zM318 279h1v1h-1zM317 280h2v1h-2zM316 281h1v1h-1zM318 281h1v1h-1zM316 282h1v1h-1zM318 282h1v1h-1zM316 283h4v1h-4zM318 284h1v1h-1zM318 285h1v1h-1z
M360 301h1v1h-1zM359 302h2v1h-2zM358 303h1v1h-1zM360 303h1v1h-1zM358 304h1v1h-1zM360 304h1v1h-1zM358 305h4v1h-4zM360 306h1v1h-1zM360 307h1v1h-1zM363 301h4v1h-4zM363 302h1v1h-1zM363 303h3v1h-3zM366 304h1v1h-1zM366 305h1v1h-1zM366 306h1v1h-1zM363 307h3v1h-3z
M227 134h2v1h-2zM226 135h1v1h-1zM226 136h1v1h-1zM226 137h3v1h-3zM226 138h1v1h-1zM229 138h1v1h-1zM226 139h1v1h-1zM229 139h1v1h-1zM227 140h2v1h-2zM232 134h2v1h-2zM231 135h1v1h-1zM234 135h1v1h-1zM231 136h1v1h-1zM234 136h1v1h-1zM231 137h1v1h-1zM234 137h1v1h-1zM231 138h1v1h-1zM234 138h1v1h-1zM231 139h1v1h-1zM234 139h1v1h-1zM232 140h2v1h-2z
M345 138h2v1h-2zM344 139h1v1h-1zM344 140h1v1h-1zM344 141h3v1h-3zM344 142h1v1h-1zM347 142h1v1h-1zM344 143h1v1h-1zM347 143h1v1h-1zM345 144h2v1h-2zM351 138h1v1h-1zM350 139h2v1h-2zM351 140h1v1h-1zM351 141h1v1h-1zM351 142h1v1h-1zM351 143h1v1h-1zM350 144h3v1h-3z
M452 179h2v1h-2zM451 180h1v1h-1zM451 181h1v1h-1zM451 182h3v1h-3zM451 183h1v1h-1zM454 183h1v1h-1zM451 184h1v1h-1zM454 184h1v1h-1zM452 185h2v1h-2zM457 179h2v1h-2zM456 180h1v1h-1zM459 180h1v1h-1zM459 181h1v1h-1zM458 182h1v1h-1zM457 183h1v1h-1zM456 184h1v1h-1zM456 185h4v1h-4z
M522 277h2v1h-2zM521 278h1v1h-1zM521 279h1v1h-1zM521 280h3v1h-3zM521 281h1v1h-1zM524 281h1v1h-1zM521 282h1v1h-1zM524 282h1v1h-1zM522 283h2v1h-2zM526 277h3v1h-3zM529 278h1v1h-1zM529 279h1v1h-1zM527 280h2v1h-2zM529 281h1v1h-1zM529 282h1v1h-1zM526 283h3v1h-3z
M548 391h2v1h-2zM547 392h1v1h-1zM547 393h1v1h-1zM547 394h3v1h-3zM547 395h1v1h-1zM550 395h1v1h-1zM547 396h1v1h-1zM550 396h1v1h-1zM548 397h2v1h-2zM554 391h1v1h-1zM553 392h2v1h-2zM552 393h1v1h-1zM554 393h1v1h-1zM552 394h1v1h-1zM554 394h1v1h-1zM552 395h4v1h-4zM554 396h1v1h-1zM554 397h1v1h-1z
M532 503h2v1h-2zM531 504h1v1h-1zM531 505h1v1h-1zM531 506h3v1h-3zM531 507h1v1h-1zM534 507h1v1h-1zM531 508h1v1h-1zM534 508h1v1h-1zM532 509h2v1h-2zM536 503h4v1h-4zM536 504h1v1h-1zM536 505h3v1h-3zM539 506h1v1h-1zM539 507h1v1h-1zM539 508h1v1h-1zM536 509h3v1h-3z
M464 602h2v1h-2zM463 603h1v1h-1zM463 604h1v1h-1zM463 605h3v1h-3zM463 606h1v1h-1zM466 606h1v1h-1zM463 607h1v1h-1zM466 607h1v1h-1zM464 608h2v1h-2zM469 602h2v1h-2zM468 603h1v1h-1zM468 604h1v1h-1zM468 605h3v1h-3zM468 606h1v1h-1zM471 606h1v1h-1zM468 607h1v1h-1zM471 607h1v1h-1zM469 608h2v1h-2z
M345 647h2v1h-2zM344 648h1v1h-1zM344 649h1v1h-1zM344 650h3v1h-3zM344 651h1v1h-1zM347 651h1v1h-1zM344 652h1v1h-1zM347 652h1v1h-1zM345 653h2v1h-2zM349 647h4v1h-4zM352 648h1v1h-1zM351 649h1v1h-1zM351 650h1v1h-1zM350 651h1v1h-1zM350 652h1v1h-1zM350 653h1v1h-1z
M233 648h2v1h-2zM232 649h1v1h-1zM232 650h1v1h-1zM232 651h3v1h-3zM232 652h1v1h-1zM235 652h1v1h-1zM232 653h1v1h-1zM235 653h1v1h-1zM233 654h2v1h-2zM238 648h2v1h-2zM237 649h1v1h-1zM240 649h1v1h-1zM237 650h1v1h-1zM240 650h1v1h-1zM238 651h2v1h-2zM237 652h1v1h-1zM240 652h1v1h-1zM237 653h1v1h-1zM240 653h1v1h-1zM238 654h2v1h-2z
M128 608h2v1h-2zM127 609h1v1h-1zM127 610h1v1h-1zM127 611h3v1h-3zM127 612h1v1h-1zM130 612h1v1h-1zM127 613h1v1h-1zM130 613h1v1h-1zM128 614h2v1h-2zM133 608h2v1h-2zM132 609h1v1h-1zM135 609h1v1h-1zM132 610h1v1h-1zM135 610h1v1h-1zM133 611h3v1h-3zM135 612h1v1h-1zM135 613h1v1h-1zM133 614h2v1h-2z
M54 510h4v1h-4zM57 511h1v1h-1zM56 512h1v1h-1zM56 513h1v1h-1zM55 514h1v1h-1zM55 515h1v1h-1zM55 516h1v1h-1zM60 510h2v1h-2zM59 511h1v1h-1zM62 511h1v1h-1zM59 512h1v1h-1zM62 512h1v1h-1zM59 513h1v1h-1zM62 513h1v1h-1zM59 514h1v1h-1zM62 514h1v1h-1zM59 515h1v1h-1zM62 515h1v1h-1zM60 516h2v1h-2z
M33 392h4v1h-4zM36 393h1v1h-1zM35 394h1v1h-1zM35 395h1v1h-1zM34 396h1v1h-1zM34 397h1v1h-1zM34 398h1v1h-1zM40 392h1v1h-1zM39 393h2v1h-2zM40 394h1v1h-1zM40 395h1v1h-1zM40 396h1v1h-1zM40 397h1v1h-1zM39 398h3v1h-3z
M45 275h4v1h-4zM48 276h1v1h-1zM47 277h1v1h-1zM47 278h1v1h-1zM46 279h1v1h-1zM46 280h1v1h-1zM46 281h1v1h-1zM51 275h2v1h-2zM50 276h1v1h-1zM53 276h1v1h-1zM53 277h1v1h-1zM52 278h1v1h-1zM51 279h1v1h-1zM50 280h1v1h-1zM50 281h4v1h-4z
M117 190h4v1h-4zM120 191h1v1h-1zM119 192h1v1h-1zM119 193h1v1h-1zM118 194h1v1h-1zM118 195h1v1h-1zM118 196h1v1h-1zM122 190h3v1h-3zM125 191h1v1h-1zM125 192h1v1h-1zM123 193h2v1h-2zM125 194h1v1h-1zM125 195h1v1h-1zM122 196h3v1h-3z
M167 238h4v1h-4zM170 239h1v1h-1zM169 240h1v1h-1zM169 241h1v1h-1zM168 242h1v1h-1zM168 243h1v1h-1zM168 244h1v1h-1zM174 238h1v1h-1zM173 239h2v1h-2zM172 240h1v1h-1zM174 240h1v1h-1zM172 241h1v1h-1zM174 241h1v1h-1zM172 242h4v1h-4zM174 243h1v1h-1zM174 244h1v1h-1z
M244 200h4v1h-4zM247 201h1v1h-1zM246 202h1v1h-1zM246 203h1v1h-1zM245 204h1v1h-1zM245 205h1v1h-1zM245 206h1v1h-1zM249 200h4v1h-4zM249 201h1v1h-1zM249 202h3v1h-3zM252 203h1v1h-1zM252 204h1v1h-1zM252 205h1v1h-1zM249 206h3v1h-3z
M329 200h4v1h-4zM332 201h1v1h-1zM331 202h1v1h-1zM331 203h1v1h-1zM330 204h1v1h-1zM330 205h1v1h-1zM330 206h1v1h-1zM335 200h2v1h-2zM334 201h1v1h-1zM334 202h1v1h-1zM334 203h3v1h-3zM334 204h1v1h-1zM337 204h1v1h-1zM334 205h1v1h-1zM337 205h1v1h-1zM335 206h2v1h-2z
M406 239h4v1h-4zM409 240h1v1h-1zM408 241h1v1h-1zM408 242h1v1h-1zM407 243h1v1h-1zM407 244h1v1h-1zM407 245h1v1h-1zM411 239h4v1h-4zM414 240h1v1h-1zM413 241h1v1h-1zM413 242h1v1h-1zM412 243h1v1h-1zM412 244h1v1h-1zM412 245h1v1h-1z
M460 309h4v1h-4zM463 310h1v1h-1zM462 311h1v1h-1zM462 312h1v1h-1zM461 313h1v1h-1zM461 314h1v1h-1zM461 315h1v1h-1zM466 309h2v1h-2zM465 310h1v1h-1zM468 310h1v1h-1zM465 311h1v1h-1zM468 311h1v1h-1zM466 312h2v1h-2zM465 313h1v1h-1zM468 313h1v1h-1zM465 314h1v1h-1zM468 314h1v1h-1zM466 315h2v1h-2z
M479 395h4v1h-4zM482 396h1v1h-1zM481 397h1v1h-1zM481 398h1v1h-1zM480 399h1v1h-1zM480 400h1v1h-1zM480 401h1v1h-1zM485 395h2v1h-2zM484 396h1v1h-1zM487 396h1v1h-1zM484 397h1v1h-1zM487 397h1v1h-1zM485 398h3v1h-3zM487 399h1v1h-1zM487 400h1v1h-1zM485 401h2v1h-2z
M461 481h2v1h-2zM460 482h1v1h-1zM463 482h1v1h-1zM460 483h1v1h-1zM463 483h1v1h-1zM461 484h2v1h-2zM460 485h1v1h-1zM463 485h1v1h-1zM460 486h1v1h-1zM463 486h1v1h-1zM461 487h2v1h-2zM467 481h2v1h-2zM466 482h1v1h-1zM469 482h1v1h-1zM466 483h1v1h-1zM469 483h1v1h-1zM466 484h1v1h-1zM469 484h1v1h-1zM466 485h1v1h-1zM469 485h1v1h-1zM466 486h1v1h-1zM469 486h1v1h-1zM467 487h2v1h-2z
M407 551h2v1h-2zM406 552h1v1h-1zM409 552h1v1h-1zM406 553h1v1h-1zM409 553h1v1h-1zM407 554h2v1h-2zM406 555h1v1h-1zM409 555h1v1h-1zM406 556h1v1h-1zM409 556h1v1h-1zM407 557h2v1h-2zM414 551h1v1h-1zM413 552h2v1h-2zM414 553h1v1h-1zM414 554h1v1h-1zM414 555h1v1h-1zM414 556h1v1h-1zM413 557h3v1h-3z
M331 590h2v1h-2zM330 591h1v1h-1zM333 591h1v1h-1zM330 592h1v1h-1zM333 592h1v1h-1zM331 593h2v1h-2zM330 594h1v1h-1zM333 594h1v1h-1zM330 595h1v1h-1zM333 595h1v1h-1zM331 596h2v1h-2zM337 590h2v1h-2zM336 591h1v1h-1zM339 591h1v1h-1zM339 592h1v1h-1zM338 593h1v1h-1zM337 594h1v1h-1zM336 595h1v1h-1zM336 596h4v1h-4z
M245 590h2v1h-2zM244 591h1v1h-1zM247 591h1v1h-1zM244 592h1v1h-1zM247 592h1v1h-1zM245 593h2v1h-2zM244 594h1v1h-1zM247 594h1v1h-1zM244 595h1v1h-1zM247 595h1v1h-1zM245 596h2v1h-2zM250 590h3v1h-3zM253 591h1v1h-1zM253 592h1v1h-1zM251 593h2v1h-2zM253 594h1v1h-1zM253 595h1v1h-1zM250 596h3v1h-3z
M168 551h2v1h-2zM167 552h1v1h-1zM170 552h1v1h-1zM167 553h1v1h-1zM170 553h1v1h-1zM168 554h2v1h-2zM167 555h1v1h-1zM170 555h1v1h-1zM167 556h1v1h-1zM170 556h1v1h-1zM168 557h2v1h-2zM175 551h1v1h-1zM174 552h2v1h-2zM173 553h1v1h-1zM175 553h1v1h-1zM173 554h1v1h-1zM175 554h1v1h-1zM173 555h4v1h-4zM175 556h1v1h-1zM175 557h1v1h-1z
M113 481h2v1h-2zM112 482h1v1h-1zM115 482h1v1h-1zM112 483h1v1h-1zM115 483h1v1h-1zM113 484h2v1h-2zM112 485h1v1h-1zM115 485h1v1h-1zM112 486h1v1h-1zM115 486h1v1h-1zM113 487h2v1h-2zM118 481h4v1h-4zM118 482h1v1h-1zM118 483h3v1h-3zM121 484h1v1h-1zM121 485h1v1h-1zM121 486h1v1h-1zM118 487h3v1h-3z
M96 395h2v1h-2zM95 396h1v1h-1zM98 396h1v1h-1zM95 397h1v1h-1zM98 397h1v1h-1zM96 398h2v1h-2zM95 399h1v1h-1zM98 399h1v1h-1zM95 400h1v1h-1zM98 400h1v1h-1zM96 401h2v1h-2zM102 395h2v1h-2zM101 396h1v1h-1zM101 397h1v1h-1zM101 398h3v1h-3zM101 399h1v1h-1zM104 399h1v1h-1zM101 400h1v1h-1zM104 400h1v1h-1zM102 401h2v1h-2z
M115 308h2v1h-2zM114 309h1v1h-1zM117 309h1v1h-1zM114 310h1v1h-1zM117 310h1v1h-1zM115 311h2v1h-2zM114 312h1v1h-1zM117 312h1v1h-1zM114 313h1v1h-1zM117 313h1v1h-1zM115 314h2v1h-2zM120 308h4v1h-4zM123 309h1v1h-1zM122 310h1v1h-1zM122 311h1v1h-1zM121 312h1v1h-1zM121 313h1v1h-1zM121 314h1v1h-1z
M292 347h2v1h-2zM291 348h1v1h-1zM294 348h1v1h-1zM291 349h1v1h-1zM294 349h1v1h-1zM292 350h2v1h-2zM291 351h1v1h-1zM294 351h1v1h-1zM291 352h1v1h-1zM294 352h1v1h-1zM292 353h2v1h-2zM298 347h2v1h-2zM297 348h1v1h-1zM300 348h1v1h-1zM297 349h1v1h-1zM300 349h1v1h-1zM298 350h2v1h-2zM297 351h1v1h-1zM300 351h1v1h-1zM297 352h1v1h-1zM300 352h1v1h-1zM298 353h2v1h-2z
M252 446h2v1h-2zM251 447h1v1h-1zM254 447h1v1h-1zM251 448h1v1h-1zM254 448h1v1h-1zM252 449h2v1h-2zM251 450h1v1h-1zM254 450h1v1h-1zM251 451h1v1h-1zM254 451h1v1h-1zM252 452h2v1h-2zM258 446h2v1h-2zM257 447h1v1h-1zM260 447h1v1h-1zM257 448h1v1h-1zM260 448h1v1h-1zM258 449h3v1h-3zM260 450h1v1h-1zM260 451h1v1h-1zM258 452h2v1h-2z
"/>
</svg>
<div class="sw" style="left:584px;top:112px;background:#000000"></div>
<div class="sw" style="left:584px;top:127px;background:#ff0000"></div>
<div class="sw" style="left:584px;top:142px;background:#00ff00"></div>
<div class="sw" style="left:584px;top:157px;background:#0080ff"></div>
<div class="sw" style="left:581px;top:169px;width:14px;height:14px;background:#ffff00"></div>
<div class="sw" style="left:584px;top:187px;background:#e066ff"></div>
<div class="sw" style="left:584px;top:202px;background:#ffa500"></div>
<div class="sw" style="left:584px;top:217px;background:#00ffff"></div>
<div class="sw" style="left:584px;top:232px;background:#b8600b"></div>
<div class="sw" style="left:584px;top:247px;background:#ffc8b8"></div>
<div class="sw" style="left:584px;top:262px;background:#80c8a0"></div>
<div class="sw" style="left:584px;top:277px;background:#0060c0"></div>
<div class="sw" style="left:584px;top:292px;background:#e6e6e6"></div>
<div class="sw" style="left:584px;top:307px;background:#a0a0a0"></div>
<div class="sw" style="left:584px;top:322px;background:#606060"></div>
<div class="sw" style="left:584px;top:337px;background:#f6ede0"></div>
<div class="sw" style="left:581px;top:380px;width:14px;height:14px;background:#000000"></div>
<div class="sw" style="left:584px;top:398px;background:#ff0000"></div>
<div class="sw" style="left:584px;top:413px;background:#00ff00"></div>
<div class="sw" style="left:584px;top:428px;background:#0080ff"></div>
<div class="sw" style="left:584px;top:443px;background:#ffff00"></div>
<div class="sw" style="left:584px;top:458px;background:#e066ff"></div>
<div class="sw" style="left:584px;top:473px;background:#ffa500"></div>
<div class="sw" style="left:584px;top:488px;background:#00ffff"></div>
<div class="sw" style="left:584px;top:503px;background:#b8600b"></div>
<div class="sw" style="left:584px;top:518px;background:#ffc8b8"></div>
<div class="sw" style="left:584px;top:533px;background:#80c8a0"></div>
<div class="sw" style="left:584px;top:548px;background:#0060c0"></div>
<div class="sw" style="left:584px;top:563px;background:#e6e6e6"></div>
<div class="sw" style="left:584px;top:578px;background:#a0a0a0"></div>
<div class="sw" style="left:584px;top:593px;background:#606060"></div>
<div class="sw" style="left:584px;top:608px;background:#f6ede0"></div>
<div class="a" style="left:582px;top:636px;width:12px;height:8px;background:#ff0;border:1px solid #000"></div>
<div class="a" style="left:581px;top:650px;width:13px;height:9px;background:#fff;border:2px solid #000"></div>
<div class="a" style="left:581px;top:665px;width:14px;height:10px;background:#fff;border:3px solid #000"></div>

<!-- right panel -->
<div class="a b" style="left:681px;top:82px;font-size:12px;line-height:14px;letter-spacing:0.6px">Messages</div>
<div class="a" style="left:600px;top:102px;width:221px;height:265px;background:#f6ede0;border-top:2px solid #111;border-left:2px solid #111;border-right:2px solid #fff;border-bottom:2px solid #fff"></div>
<div class="a" style="left:602px;top:104px;width:201px;height:261px;overflow:hidden">
<div class="a" style="left:5.6px;top:-6.8px;font-size:12px;line-height:14px;white-space:nowrap;letter-spacing:0px">Eigenvalues:71</div>
<div class="a" style="left:5.6px;top:9.7px;font-size:12px;line-height:14px;white-space:nowrap;letter-spacing:-0.031px">0.011815 M:2 P:2%</div>
<div class="a" style="left:5.6px;top:27.7px;font-size:12px;line-height:14px;white-space:nowrap;letter-spacing:-0.031px">0.011815 M:2 P:5%</div>
<div class="a" style="left:5.6px;top:45.7px;font-size:12px;line-height:14px;white-space:nowrap;letter-spacing:0.094px">0.011793 M:1 P:7%</div>
<div class="a" style="left:5.6px;top:63.7px;font-size:12px;line-height:14px;white-space:nowrap;letter-spacing:-0.041px">0.011184 M:2 P:10%</div>
<div class="a" style="left:5.6px;top:81.7px;font-size:12px;line-height:14px;white-space:nowrap;letter-spacing:0.4px">----</div>
<div class="a" style="left:5.6px;top:99.7px;font-size:12px;line-height:14px;white-space:nowrap;letter-spacing:0.066px">Equal:30 MaxMul:2 Null:0 Neg:0</div>
<div class="a" style="left:5.6px;top:117.7px;font-size:12px;line-height:14px;white-space:nowrap;letter-spacing:0.348px">11 simple eigenvalues (3,8,17,...)</div>
<div class="a" style="left:5.6px;top:135.7px;font-size:12px;line-height:14px;white-space:nowrap;letter-spacing:0.389px">#Classes:4</div>
<div class="a" style="left:5.6px;top:153.7px;font-size:12px;line-height:14px;white-space:nowrap;letter-spacing:-0.129px">Opt Dim.:2 (2.121)</div>
<div class="a" style="left:5.6px;top:171.7px;font-size:12px;line-height:14px;white-space:nowrap;letter-spacing:0.4px">Class (1):20</div>
<div class="a" style="left:5.6px;top:189.7px;font-size:12px;line-height:14px;white-space:nowrap;letter-spacing:0.473px">Class (2):17</div>
<div class="a" style="left:5.6px;top:207.7px;font-size:12px;line-height:14px;white-space:nowrap;letter-spacing:0.4px">Class (3):20</div>
<div class="a" style="left:5.6px;top:225.7px;font-size:12px;line-height:14px;white-space:nowrap;letter-spacing:0.4px">Class (4):15</div>
<div class="a" style="left:5.6px;top:243.7px;font-size:12px;line-height:14px;white-space:nowrap;letter-spacing:0.15px">Used time:0.029 (G:0.083)</div>
</div>
<!-- scrollbar -->
<div class="a" style="left:803px;top:104px;width:16px;height:261px;background:#b4d2f0"></div>
<div class="a" style="left:803px;top:120px;width:16px;height:65px;background-image:repeating-conic-gradient(#fff 0 25%, #9ab0c6 0 50%);background-size:2px 2px"></div>
<div class="a" style="left:803px;top:104px;width:16px;height:16px;background:#b4d2f0;border-top:1px solid #fff;border-left:1px solid #fff;border-right:1px solid #000;border-bottom:1px solid #000;box-shadow:inset -1px -1px 0 #6a7a8a, inset 1px 1px 0 #e6eef6"></div>
<svg class="a" style="left:803px;top:104px" width="16" height="16"><path d="M3.5 10 L7.75 5.5 L12 10 Z" fill="#000"/></svg>
<div class="a" style="left:803px;top:185px;width:16px;height:164px;background:#b4d2f0;border-right:1px solid #000;border-bottom:1px solid #000;border-top:1px solid #fff;border-left:1px solid #fff;box-shadow:inset -1px -1px 0 #6a7a8a, inset 1px 1px 0 #e6eef6"></div>
<div class="a" style="left:803px;top:349px;width:16px;height:16px;background:#b4d2f0;border-top:1px solid #fff;border-left:1px solid #fff;border-right:1px solid #000;border-bottom:1px solid #000;box-shadow:inset -1px -1px 0 #6a7a8a, inset 1px 1px 0 #e6eef6"></div>
<svg class="a" style="left:803px;top:349px" width="16" height="16"><path d="M3.5 5.5 L7.75 10 L12 5.5 Z" fill="#000"/></svg>

<!-- graph properties -->
<div class="a b" style="left:663px;top:373px;font-size:11.5px;line-height:14px;letter-spacing:0.133px">Graph Properties</div>
<div class="rl" style="left:614px;top:400px">N:</div>
<div class="in" style="left:643px;top:394px;width:60px;height:23px"></div>
<div class="rl" style="left:646px;top:400px">72</div>
<div class="rl" style="left:716px;top:400px">M:</div>
<div class="in" style="left:746px;top:394px;width:60px;height:23px"></div>
<div class="rl" style="left:750px;top:400px">147</div>
<div class="rad on" style="left:611px;top:432px"></div>
<div class="rl" style="left:632px;top:432px;letter-spacing:0.125px">Connected</div>
<div class="rad on" style="left:611px;top:454px"></div>
<div class="rl" style="left:632px;top:454px;letter-spacing:0.0px">2-Connected</div>
<div class="rad" style="left:611px;top:475px;background:#b4d2f0"></div>
<div class="rl" style="left:632px;top:475px;letter-spacing:0.24px;color:#d8d8d8;text-shadow:1px 1px 0 #fff">3-Connected</div>
<div class="rad" style="left:611px;top:497px"></div>
<div class="rl" style="left:632px;top:497px;letter-spacing:0.662px">Bipartite</div>
<div class="rad" style="left:611px;top:519px"></div>
<div class="rl" style="left:632px;top:519px;letter-spacing:0.667px">Regular</div>
<div class="rad" style="left:717px;top:432px"></div>
<div class="rl" style="left:738px;top:432px;letter-spacing:0.56px">Planar</div>
<div class="rad" style="left:717px;top:454px"></div>
<div class="rl" style="left:738px;top:454px;letter-spacing:0.5px">Max. planar</div>
<div class="rad" style="left:717px;top:475px"></div>
<div class="rl" style="left:738px;top:475px;letter-spacing:0.5px">Out. planar</div>
<div class="rad" style="left:717px;top:497px"></div>
<div class="rl" style="left:738px;top:497px;letter-spacing:0.214px">Serie-//</div>
<div class="rad on" style="left:717px;top:519px"></div>
<div class="rl" style="left:738px;top:519px;letter-spacing:0.9px">Simple</div>

<!-- left button panel -->
<div class="a" style="left:601px;top:547px;width:220px;height:138px;background:#b4d2f0"></div>
<div class="a" style="left:606px;top:555px;width:89px;height:120px;border:1px solid #6a7a8a;box-shadow:1px 1px 0 #fff, inset 1px 1px 0 #fff"></div>
<div class="a b" style="left:614px;top:548px;padding:0 3px;background:#b4d2f0;font-size:11.5px;line-height:14px;letter-spacing:0.13px">Left Button</div>
<div class="rad" style="left:612px;top:566px"></div>
<div class="rl" style="left:633px;top:566px;letter-spacing:0.325px">Col/Thick</div>
<div class="rad" style="left:612px;top:583px"></div>
<div class="rl" style="left:633px;top:583px;letter-spacing:-0.3px">Add</div>
<div class="rad" style="left:612px;top:602px"></div>
<div class="rl" style="left:633px;top:602px;letter-spacing:0.85px">Del</div>
<div class="rad on" style="left:612px;top:619px"></div>
<div class="rl" style="left:633px;top:619px;letter-spacing:0.2px">Move</div>
<div class="rad" style="left:612px;top:637px"></div>
<div class="rl" style="left:633px;top:637px;letter-spacing:1.1px">Bissect</div>
<div class="rad" style="left:612px;top:655px"></div>
<div class="rl" style="left:633px;top:655px;letter-spacing:0.229px">Contract</div>
<div class="a" style="left:706px;top:555px;width:3px;height:113px;background:#000;border-right:1px solid #fff"></div>
<div class="a" style="left:701px;top:659px;width:15px;height:11px;background:#b4d2f0;border-top:1px solid #fff;border-left:1px solid #fff;border-right:1px solid #000;border-bottom:1px solid #000"></div>
<div class="a" style="left:719px;top:555px;width:30px;height:30px;border-top:1px solid #fff;border-left:1px solid #fff;border-right:1px solid #6a7a8a;border-bottom:1px solid #6a7a8a;box-shadow:inset 1px 1px 0 #6a7a8a, inset -1px -1px 0 #fff"></div>
<svg class="a" style="left:726px;top:563px" width="20" height="15" shape-rendering="crispEdges"><rect x="1" y="1" width="2" height="6"/><rect x="1" y="8" width="2" height="6"/><rect x="4" y="0" width="7" height="2"/><rect x="4" y="13" width="7" height="2"/><rect x="4" y="0" width="2" height="7"/><rect x="4" y="8" width="2" height="7"/><rect x="9" y="0" width="2" height="7"/><rect x="9" y="8" width="2" height="7"/><rect x="12" y="0" width="7" height="2"/><rect x="12" y="13" width="7" height="2"/><rect x="12" y="0" width="2" height="7"/><rect x="12" y="8" width="2" height="7"/><rect x="17" y="0" width="2" height="7"/><rect x="17" y="8" width="2" height="7"/></svg>
<div class="in" style="left:719px;top:593px;width:13px;height:13px"></div>
<div class="rl" style="left:741px;top:593px;letter-spacing:0.557px">Fit grid</div>
<div class="in" style="left:719px;top:613px;width:13px;height:13px"></div>
<div class="rl" style="left:740px;top:613px;letter-spacing:0.275px">Show grid</div>
<div class="btn" style="left:719px;top:633px;width:48px;height:20px;letter-spacing:-0.067px">Force G</div>
<div class="btn" style="left:766px;top:633px;width:50px;height:20px;color:#8a8a8a;text-shadow:1px 1px 0 #fff;letter-spacing:0.38px">Undo G</div>
<div class="btn" style="left:719px;top:653px;width:48px;height:20px;letter-spacing:0.7px">Z. in</div>
<div class="btn" style="left:766px;top:653px;width:50px;height:20px;letter-spacing:0.24px">Z. out</div>

<!-- status bar -->
<div class="a" style="left:4px;top:687px;width:817px;height:2px;background:#a9b9c9"></div>
<div class="a" style="left:4px;top:689px;width:817px;height:25px;background:#f6ede0"></div>
<div class="a" style="left:10px;top:694px;font-size:12px;line-height:14px;white-space:nowrap;letter-spacing:0.23px">Input file: Sydney.tgf</div>
<div class="a" style="left:121px;top:694px;font-size:12px;line-height:14px;white-space:nowrap;letter-spacing:-0.43px">2/24</div>
<div class="a" style="left:148px;top:694px;font-size:12px;line-height:14px;white-space:nowrap;letter-spacing:-0.055px">Output file: a.tgf 54</div>
<div class="a" style="left:807px;top:694px;width:14px;height:20px;background:#a9b9c9"></div>
<svg class="a" style="left:807px;top:694px" width="14" height="20"><path d="M0 19.5 L14 5.5" stroke="#fff" stroke-width="1.1"/><path d="M1.5 19.5 L14 7" stroke="#333" stroke-width="1.1"/><path d="M4.0 19.5 L14 9.5" stroke="#fff" stroke-width="1.1"/><path d="M5.5 19.5 L14 11" stroke="#333" stroke-width="1.1"/><path d="M8.0 19.5 L14 13.5" stroke="#fff" stroke-width="1.1"/><path d="M9.5 19.5 L14 15" stroke="#333" stroke-width="1.1"/><path d="M12.0 19.5 L14 17.5" stroke="#fff" stroke-width="1.1"/></svg>
<div class="a" style="left:2px;top:714px;width:821px;height:6px;background:#b8b8b8;border-top:1px solid #7a7a7a"></div>
<div class="a" style="left:2px;top:715px;width:821px;height:1px;background:#fff"></div>
<div class="a" style="left:2px;top:716px;width:18px;height:4px;background:#a0a0a0"></div>
<div class="a" style="left:20px;top:715px;width:1px;height:5px;background:#7a7a7a"></div>
<div class="a" style="left:21px;top:716px;width:1px;height:4px;background:#fff"></div>
<div class="a" style="left:0;top:720px;width:825px;height:2px;background:#000"></div>

<!-- window frame -->
<div class="a" style="left:0;top:42px;width:1px;height:680px;background:#000"></div>
<div class="a" style="left:1px;top:42px;width:1px;height:678px;background:#fff"></div>
<div class="a" style="left:2px;top:42px;width:1px;height:678px;background:#9a9a9a"></div>
<div class="a" style="left:3px;top:48px;width:1px;height:666px;background:#6a6a6a"></div>
<div class="a" style="left:821px;top:20px;width:1px;height:700px;background:#777"></div>
<div class="a" style="left:822px;top:20px;width:1px;height:700px;background:#c8c8c8"></div>
<div class="a" style="left:823px;top:1px;width:1px;height:719px;background:#777"></div>
<div class="a" style="left:824px;top:0px;width:1px;height:722px;background:#000"></div>
</div>
</body></html>
